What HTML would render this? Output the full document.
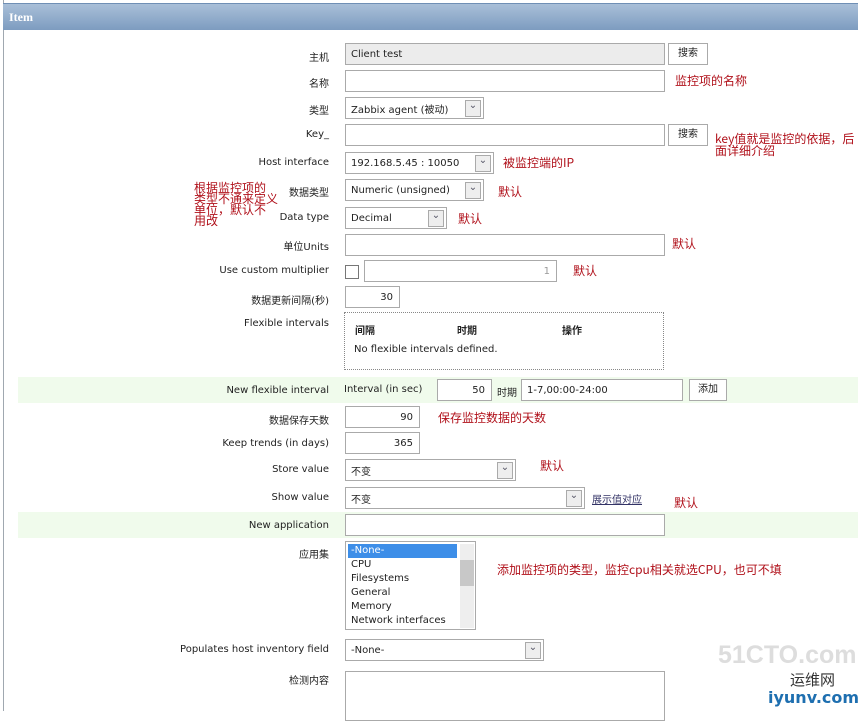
<!DOCTYPE html>
<html><head><meta charset="utf-8"><style>
body{margin:0;width:858px;height:711px;overflow:hidden;background:#fff;font-family:"DejaVu Sans","Noto Sans CJK SC",sans-serif;font-size:10px;color:#222;position:relative}
.a{position:absolute}
.hd{left:3px;top:3px;width:855px;height:26px;background:linear-gradient(#a9bfd8,#7d9cc0);border-top:1px solid #6f8fb5}
.hd b{position:absolute;left:6px;top:6px;color:#fff;font-size:12px;font-family:"Liberation Serif","Noto Serif CJK SC",serif}
.lb{position:absolute;right:529px;text-align:right;white-space:nowrap;margin-top:1px}
.in{position:absolute;border:1px solid #aaa;background:#fff;box-sizing:border-box;padding-left:5px;display:flex;align-items:center;white-space:nowrap;overflow:hidden}
.sel::after{content:"⌄";position:absolute;right:2px;top:2px;width:14px;height:15px;border:1px solid #aaa;background:#eee;font-size:10px;line-height:10px;text-align:center;color:#556}
.bt{position:absolute;border:1px solid #aaa;background:#fff;box-sizing:border-box;text-align:center;line-height:19px;font-size:10px}
.r{position:absolute;color:#b0101a;font-size:12px;font-family:"Noto Sans CJK SC",sans-serif;white-space:nowrap}
.gr{position:absolute;left:18px;width:840px;height:26px;background:#f0fbec}
.rt{justify-content:flex-end;padding-right:6px}
</style></head><body>
<div class="a" style="left:3px;top:0;width:1px;height:711px;background:#a0a8b0"></div>
<div class="a hd"><b>Item</b></div>
<div class="gr" style="top:377px"></div>
<div class="gr" style="top:512px"></div>

<div class="lb" style="top:48px">主机</div>
<div class="in" style="left:345px;top:43px;width:320px;height:22px;background:#ececec">Client test</div>
<div class="bt" style="left:668px;top:43px;width:40px;height:22px">搜索</div>

<div class="lb" style="top:74px">名称</div>
<div class="in" style="left:345px;top:70px;width:320px;height:22px"></div>
<div class="r" style="left:675px;top:72px">监控项的名称</div>

<div class="lb" style="top:101px">类型</div>
<div class="in sel" style="left:345px;top:97px;width:139px;height:22px">Zabbix agent (被动)</div>

<div class="lb" style="top:128px">Key_</div>
<div class="in" style="left:345px;top:124px;width:320px;height:22px"></div>
<div class="bt" style="left:668px;top:124px;width:40px;height:22px">搜索</div>
<div class="r" style="left:715px;top:133px;line-height:12px">key值就是监控的依据，后<br>面详细介绍</div>

<div class="lb" style="top:156px">Host interface</div>
<div class="in sel" style="left:345px;top:152px;width:149px;height:22px">192.168.5.45 : 10050</div>
<div class="r" style="left:503px;top:154px">被监控端的IP</div>

<div class="r" style="left:194px;top:182px;line-height:11px">根据监控项的<br>类型不通来定义<br>单位，默认不<br>用改</div>
<div class="lb" style="top:183px">数据类型</div>
<div class="in sel" style="left:345px;top:179px;width:139px;height:22px">Numeric (unsigned)</div>
<div class="r" style="left:498px;top:183px">默认</div>

<div class="lb" style="top:211px">Data type</div>
<div class="in sel" style="left:345px;top:207px;width:102px;height:22px">Decimal</div>
<div class="r" style="left:458px;top:210px">默认</div>

<div class="lb" style="top:237px">单位Units</div>
<div class="in" style="left:345px;top:234px;width:320px;height:22px"></div>
<div class="r" style="left:672px;top:235px">默认</div>

<div class="lb" style="top:264px">Use custom multiplier</div>
<div class="a" style="left:345px;top:265px;width:12px;height:12px;border:1px solid #777;background:#fff"></div>
<div class="in rt" style="left:364px;top:260px;width:193px;height:22px;color:#999">1</div>
<div class="r" style="left:573px;top:262px">默认</div>

<div class="lb" style="top:291px">数据更新间隔(秒)</div>
<div class="in rt" style="left:345px;top:286px;width:55px;height:22px">30</div>

<div class="lb" style="top:317px">Flexible intervals</div>
<div class="a" style="left:344px;top:312px;width:318px;height:56px;border:1px dotted #888">
<b class="a" style="left:10px;top:9px">间隔</b><b class="a" style="left:112px;top:9px">时期</b><b class="a" style="left:217px;top:9px">操作</b>
<div class="a" style="left:9px;top:31px">No flexible intervals defined.</div></div>

<div class="lb" style="top:384px">New flexible interval</div>
<div class="a" style="left:344px;top:384px">Interval (in sec)</div>
<div class="in rt" style="left:437px;top:379px;width:55px;height:22px">50</div>
<div class="a" style="left:497px;top:384px;font-size:10px">时期</div>
<div class="in" style="left:521px;top:379px;width:162px;height:22px">1-7,00:00-24:00</div>
<div class="bt" style="left:689px;top:379px;width:38px;height:22px">添加</div>

<div class="lb" style="top:411px">数据保存天数</div>
<div class="in rt" style="left:345px;top:406px;width:75px;height:22px">90</div>
<div class="r" style="left:438px;top:409px">保存监控数据的天数</div>

<div class="lb" style="top:437px">Keep trends (in days)</div>
<div class="in rt" style="left:345px;top:432px;width:75px;height:22px">365</div>

<div class="lb" style="top:463px">Store value</div>
<div class="in sel" style="left:345px;top:459px;width:171px;height:22px;font-size:10px">不变</div>
<div class="r" style="left:540px;top:457px">默认</div>

<div class="lb" style="top:491px">Show value</div>
<div class="in sel" style="left:345px;top:487px;width:240px;height:22px;font-size:10px">不变</div>
<div class="a" style="left:592px;top:491px;font-size:10px;color:#336;text-decoration:underline">展示值对应</div>
<div class="r" style="left:674px;top:494px">默认</div>

<div class="lb" style="top:519px">New application</div>
<div class="in" style="left:345px;top:514px;width:320px;height:22px"></div>

<div class="lb" style="top:545px">应用集</div>
<div class="a" style="left:345px;top:541px;width:131px;height:89px;border:1px solid #aaa;box-sizing:border-box;line-height:14px">
<div class="a" style="left:2px;top:2px;width:109px;height:14px;background:#3d8ee8;color:#fff;padding-left:3px;box-sizing:border-box">-None-</div>
<div class="a" style="left:5px;top:16px">CPU<br>Filesystems<br>General<br>Memory<br>Network interfaces</div>
<div class="a" style="left:114px;top:2px;width:14px;height:84px;background:#eee"><div class="a" style="left:0;top:16px;width:14px;height:26px;background:#c8c8c8"></div></div></div>
<div class="r" style="left:497px;top:561px">添加监控项的类型，监控cpu相关就选CPU，也可不填</div>

<div class="lb" style="top:643px">Populates host inventory field</div>
<div class="in sel" style="left:345px;top:639px;width:199px;height:22px">-None-</div>

<div class="lb" style="top:671px">检测内容</div>
<div class="in" style="left:345px;top:671px;width:320px;height:50px"></div>

<div class="a" style="left:718px;top:641px;font-size:25px;font-weight:bold;color:#ddd;font-family:'Liberation Sans',sans-serif">51CTO.com</div>
<div class="a" style="left:790px;top:669px;font-size:15px;color:#333;font-family:'Noto Sans CJK SC',sans-serif">运维网</div>
<div class="a" style="left:768px;top:688px;font-size:16px;font-weight:bold;color:#1e6fb0">iyunv.com</div>
</body></html>
